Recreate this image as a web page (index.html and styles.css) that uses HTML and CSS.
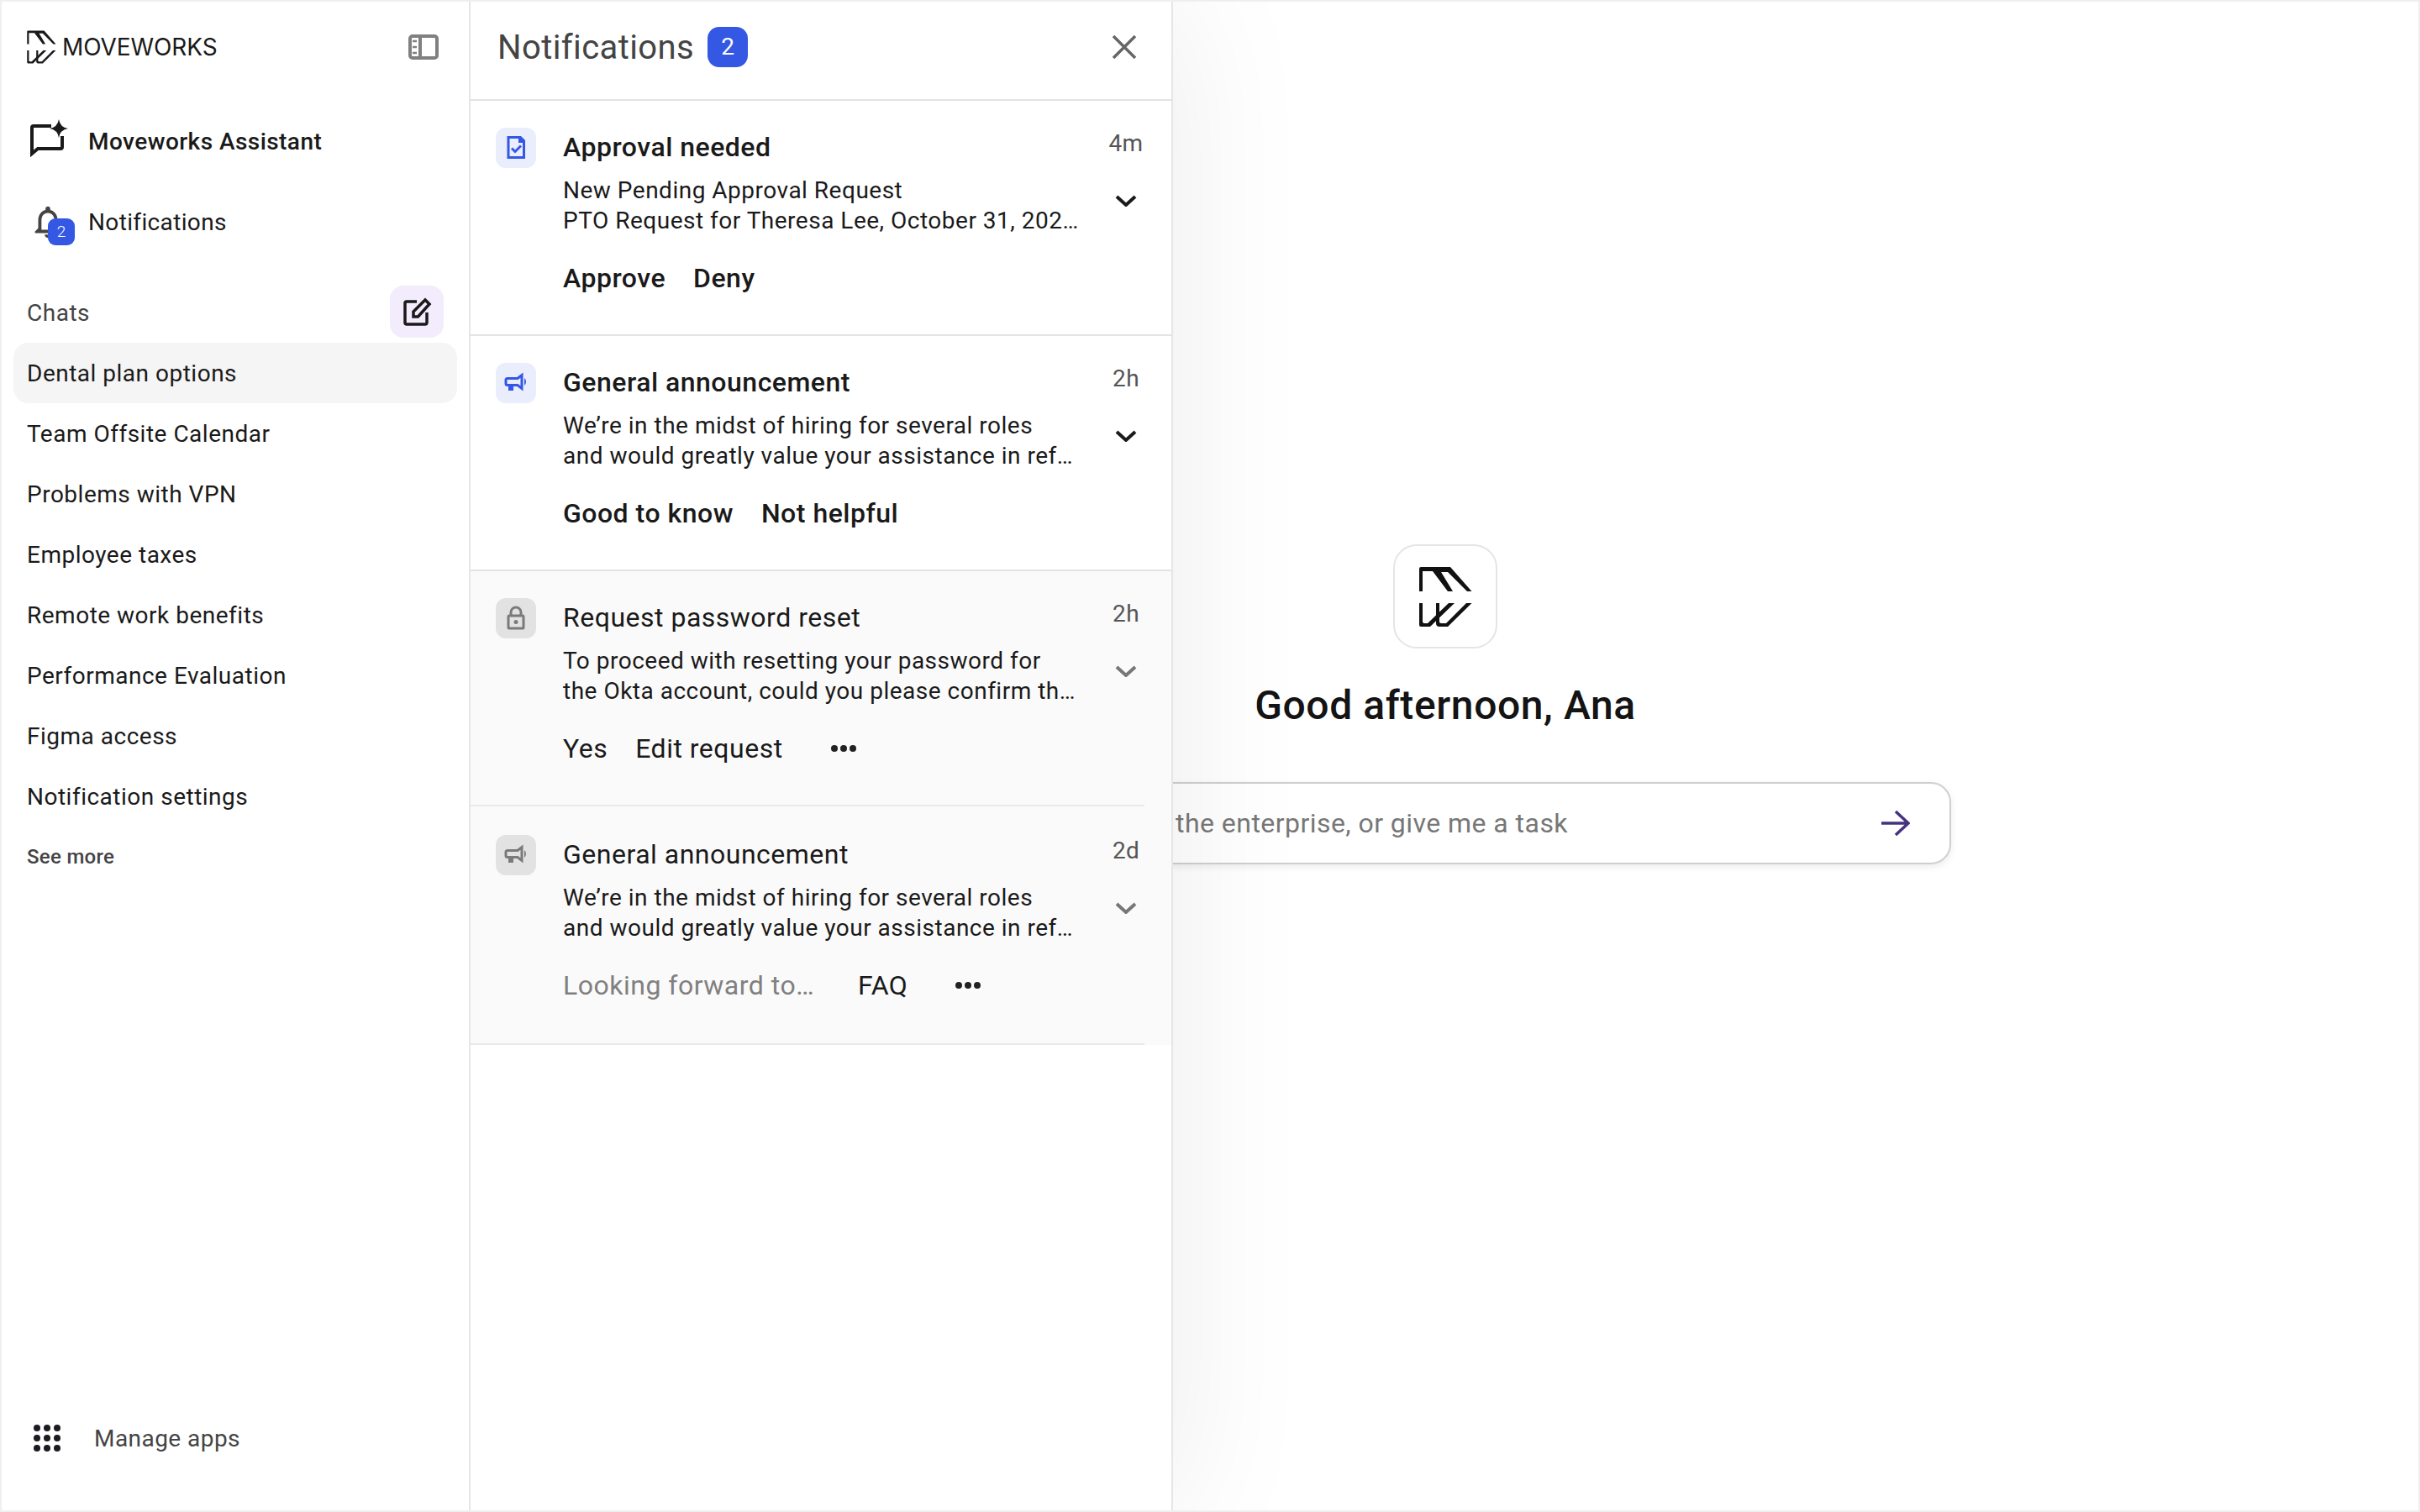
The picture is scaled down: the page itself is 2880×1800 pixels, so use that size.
FILE: index.html
```html
<!DOCTYPE html>
<html lang="en">
<head>
  <meta charset="UTF-8" />
  <title>Moveworks Assistant</title>
  <link rel="stylesheet" href="styles.css">
</head>
<body>
  <div class="app">
    <aside class="sidebar">
      <div class="side-head">
        <div class="brand">
          <svg class="brand-logo" viewBox="38 33 63 73"><path d="M38 63V36q0-2 2-2H75L100.500 63H95L72 40H64L78 63H72L54 39H42V63Z"/><path d="M38 77H42V99q0 2 2 2H48L73 77H80L51 105H40q-2 0-2-2Z"/><path d="M58 77H62V99q0 2 2 2H70L94 77H100.500L72 105H62q-4 0-4-4Z"/></svg>
          <span>MOVEWORKS</span>
        </div>
        <svg class="collapse" viewBox="0 0 36 30"><rect x="2" y="2" width="32" height="26" rx="3"/><path d="M14 2V28"/><path class="ticks" d="M5 8H10M5 15H10M5 22H10"/></svg>
      </div>

      <nav class="side-nav">
        <a class="nav-item nav-strong">
          <span class="nav-icon">
            <svg width="60" height="60" viewBox="0 0 60 60"><path class="line" d="M31 12H10a2 2 0 0 0-2 2V45L15 39H42a2 2 0 0 0 2-2V24"/><path d="M40 4Q41.5 13.5 51 15 41.5 16.5 40 26 38.5 16.5 29 15 38.5 13.5 40 4Z"/></svg>
          </span>
          Moveworks Assistant
        </a>
        <a class="nav-item nav-plain">
          <span class="nav-icon">
            <svg class="bell" width="46" height="46" viewBox="0 0 24 24"><path d="M12 22c1.1 0 2-.9 2-2h-4c0 1.1.89 2 2 2zm6-6v-5c0-3.07-1.64-5.64-4.5-6.32V4c0-.83-.67-1.5-1.5-1.5s-1.5.67-1.5 1.5v.68C7.63 5.36 6 7.92 6 11v5l-2 2v1h16v-1l-2-2zm-2 1H8v-6c0-2.48 1.51-4.5 4-4.5s4 2.02 4 4.5v6z"/></svg>
            <span class="bell-badge">2</span>
          </span>
          Notifications
        </a>
      </nav>

      <div class="chats-head">
        <span>Chats</span>
        <button class="compose">
          <svg width="36" height="36" viewBox="0 0 36 36"><path d="M18 6H6a2 2 0 0 0-2 2V31a2 2 0 0 0 2 2H28a2 2 0 0 0 2-2V19"/><path d="M14 24V18L28 4 33 9 19.5 24Z"/></svg>
        </button>
      </div>

      <ul class="chat-list">
        <li class="chat active">Dental plan options</li>
        <li class="chat">Team Offsite Calendar</li>
        <li class="chat">Problems with VPN</li>
        <li class="chat">Employee taxes</li>
        <li class="chat">Remote work benefits</li>
        <li class="chat">Performance Evaluation</li>
        <li class="chat">Figma access</li>
        <li class="chat">Notification settings</li>
      </ul>
      <div class="see-more">See more</div>

      <div class="side-foot">
        <svg width="32" height="32" viewBox="0 0 32 32"><circle cx="4" cy="4" r="4"/><circle cx="16" cy="4" r="4"/><circle cx="28" cy="4" r="4"/><circle cx="4" cy="16" r="4"/><circle cx="16" cy="16" r="4"/><circle cx="28" cy="16" r="4"/><circle cx="4" cy="28" r="4"/><circle cx="16" cy="28" r="4"/><circle cx="28" cy="28" r="4"/></svg>
        <span>Manage apps</span>
      </div>
    </aside>

    <main class="main">
      <div class="hero-logo">
        <svg width="63" height="73" viewBox="38 33 63 73"><path d="M38 63V36q0-2 2-2H75L100.500 63H95L72 40H64L78 63H72L54 39H42V63Z"/><path d="M38 77H42V99q0 2 2 2H48L73 77H80L51 105H40q-2 0-2-2Z"/><path d="M58 77H62V99q0 2 2 2H70L94 77H100.500L72 105H62q-4 0-4-4Z"/></svg>
      </div>
      <h1 class="greeting">Good afternoon, Ana</h1>
      <form class="ask">
        <input type="text" placeholder="Ask me about the enterprise, or give me a task" />
        <svg width="34" height="30" viewBox="0 0 34 30"><path d="M0 15H32M17 1L32 15 17 29"/></svg>
      </form>

      <section class="panel">
        <header class="panel-head">
          <h2>Notifications</h2>
          <span class="count">2</span>
          <svg class="close" width="30" height="28" viewBox="0 0 30 28"><path d="M2 1L28 27M28 1L2 27"/></svg>
        </header>

        <article class="note">
          <div class="note-grid">
            <div class="note-icon">
              <svg width="48" height="48" viewBox="0 0 48 48"><path class="line" d="M15 11.5H28L33.5 17V35.5H15Z"/><path d="M27 10H30L35 15V18H27Z"/><path class="line" d="M19 24.5L23 28.5 30 21.5"/></svg>
            </div>
            <div>
              <h3>Approval needed</h3>
              <p>New Pending Approval Request<br>PTO Request for Theresa Lee, October 31, 202…</p>
              <div class="actions">
                <span>Approve</span>
                <span>Deny</span>
              </div>
            </div>
            <div class="note-side">
              <time>4m</time>
              <svg class="chevron" width="26" height="14" viewBox="0 0 26 14"><path d="M2 2L13 12 24 2"/></svg>
            </div>
          </div>
          <div class="rule"></div>
        </article>

        <article class="note">
          <div class="note-grid">
            <div class="note-icon">
              <svg width="48" height="48" viewBox="0 0 48 48"><path class="line" d="M14 18.500H26L31 14.500V30.500L26 26.500H14a2 2 0 0 1-2-2V20.500a2 2 0 0 1 2-2Z"/><path d="M15 26H21V33H15ZM34 18a6 6 0 0 1 0 9Z"/></svg>
            </div>
            <div>
              <h3>General announcement</h3>
              <p>We’re in the midst of hiring for several roles<br>and would greatly value your assistance in ref…</p>
              <div class="actions">
                <span>Good to know</span>
                <span>Not helpful</span>
              </div>
            </div>
            <div class="note-side">
              <time>2h</time>
              <svg class="chevron" width="26" height="14" viewBox="0 0 26 14"><path d="M2 2L13 12 24 2"/></svg>
            </div>
          </div>
          <div class="rule"></div>
        </article>

        <article class="note read">
          <div class="note-grid">
            <div class="note-icon">
              <svg width="48" height="48" viewBox="0 0 48 48"><rect class="line" x="15" y="21" width="18" height="15" rx="1"/><path class="line" d="M18 21V17a6 6 0 0 1 12 0V21"/><circle cx="24" cy="28.500" r="2.500"/></svg>
            </div>
            <div>
              <h3>Request password reset</h3>
              <p>To proceed with resetting your password for<br>the Okta account, could you please confirm th…</p>
              <div class="actions">
                <span>Yes</span>
                <span>Edit request</span>
                <svg class="dots" width="30" height="8" viewBox="0 0 30 8"><circle cx="4" cy="4" r="4"/><circle cx="15" cy="4" r="4"/><circle cx="26" cy="4" r="4"/></svg>
              </div>
            </div>
            <div class="note-side">
              <time>2h</time>
              <svg class="chevron" width="26" height="14" viewBox="0 0 26 14"><path d="M2 2L13 12 24 2"/></svg>
            </div>
          </div>
          <div class="rule"></div>
        </article>

        <article class="note read last">
          <div class="note-grid">
            <div class="note-icon">
              <svg width="48" height="48" viewBox="0 0 48 48"><path class="line" d="M14 18.500H26L31 14.500V30.500L26 26.500H14a2 2 0 0 1-2-2V20.500a2 2 0 0 1 2-2Z"/><path d="M15 26H21V33H15ZM34 18a6 6 0 0 1 0 9Z"/></svg>
            </div>
            <div>
              <h3>General announcement</h3>
              <p>We’re in the midst of hiring for several roles<br>and would greatly value your assistance in ref…</p>
              <div class="actions">
                <span class="faded">Looking forward to…</span>
                <span>FAQ</span>
                <svg class="dots" width="30" height="8" viewBox="0 0 30 8"><circle cx="4" cy="4" r="4"/><circle cx="15" cy="4" r="4"/><circle cx="26" cy="4" r="4"/></svg>
              </div>
            </div>
            <div class="note-side">
              <time class="old">2d</time>
              <svg class="chevron" width="26" height="14" viewBox="0 0 26 14"><path d="M2 2L13 12 24 2"/></svg>
            </div>
          </div>
          <div class="rule"></div>
        </article>
      </section>
    </main>
  </div>
</body>
</html>
```

FILE: styles.css
```css
* {
  box-sizing: border-box;
  margin: 0;
  padding: 0;
}

html, body {
  height: 100%;
}

body {
  font-family: 'Roboto', sans-serif;
  color: #1a1a1a;
  background: #fff;
}

.app {
  display: flex;
  height: 1800px;
  border: 2px solid #efefef;
  overflow: hidden;
}

/* sidebar */

.sidebar {
  position: relative;
  z-index: 2;
  flex: 0 0 558px;
  display: flex;
  flex-direction: column;
  background: #fff;
  border-right: 2px solid #e6e6e6;
}

.side-head {
  display: flex;
  align-items: center;
  justify-content: space-between;
  height: 108px;
  padding: 0 36px 0 30px;
}

.brand {
  display: flex;
  align-items: center;
  gap: 7px;
  font-family: 'Inter', sans-serif;
  font-size: 28px;
  letter-spacing: -0.1px;
}

.brand-logo {
  width: 35px;
  height: 40px;
  fill: #1a1a1a;
}

.collapse {
  width: 36px;
  height: 30px;
  fill: none;
  stroke: #808080;
  stroke-width: 4;
}

.collapse .ticks {
  stroke-width: 2.5;
}

.side-nav {
  margin-top: 10px;
}

.nav-item {
  display: flex;
  align-items: center;
  height: 96px;
  padding-left: 28px;
  font-size: 28px;
  letter-spacing: 0.45px;
}

.nav-plain {
  letter-spacing: 0.35px;
}

.nav-strong {
  font-weight: 500;
}

.nav-icon {
  position: relative;
  display: flex;
  align-items: center;
  width: 75px;
  height: 60px;
}

.nav-icon svg {
  fill: #1a1a1a;
}

.nav-icon .line {
  fill: none;
  stroke: #1a1a1a;
  stroke-width: 4;
}

.nav-icon .bell {
  fill: #444;
  margin-left: 4px;
}

.bell-badge {
  position: absolute;
  left: 27px;
  top: 26px;
  width: 32px;
  height: 32px;
  border-radius: 9px;
  background: #3457e4;
  color: #fff;
  font-size: 19px;
  font-weight: 300;
  line-height: 32px;
  text-align: center;
  letter-spacing: 0;
}

.chats-head {
  display: flex;
  align-items: center;
  justify-content: space-between;
  height: 62px;
  margin-top: 28px;
  padding: 0 30px 0 30px;
  font-size: 28px;
  letter-spacing: 0.5px;
  color: #444;
}

.chats-head span {
  padding-top: 2px;
}

.compose {
  width: 64px;
  height: 62px;
  border: none;
  border-radius: 16px;
  background: #f3ecfd;
  display: flex;
  align-items: center;
  justify-content: center;
}

.compose svg {
  fill: none;
  stroke: #1a1a1a;
  stroke-width: 3.5;
}

.chat-list {
  list-style: none;
  margin-top: 6px;
  padding: 0 14px;
}

.chat {
  height: 72px;
  padding: 1px 0 0 16px;
  border-radius: 18px;
  font-size: 28px;
  letter-spacing: 0.5px;
  line-height: 72px;
}

.chat.active {
  background: #f5f5f5;
}

.see-more {
  height: 70px;
  padding: 1px 0 0 30px;
  font-size: 24px;
  font-weight: 500;
  letter-spacing: 0.3px;
  line-height: 70px;
  color: #444;
}

.side-foot {
  display: flex;
  align-items: center;
  gap: 40px;
  height: 172px;
  margin-top: auto;
  padding-left: 38px;
  font-size: 28px;
  letter-spacing: 0.45px;
  color: #444;
}

.side-foot svg {
  fill: #1c1b22;
}

/* main column, the notifications panel lies over it */

.main {
  position: relative;
  flex: 1;
  display: flex;
  flex-direction: column;
  align-items: center;
  padding: 646px 0 0 2px;
}

.hero-logo {
  display: flex;
  align-items: center;
  justify-content: center;
  width: 124px;
  height: 124px;
  border: 2px solid #e5e5e5;
  border-radius: 28px;
}

.hero-logo svg {
  fill: #111;
}

.greeting {
  margin-top: 40px;
  font-size: 48px;
  font-weight: 500;
  line-height: 56px;
  letter-spacing: 0.6px;
  color: #141414;
}

.ask {
  display: flex;
  align-items: center;
  width: 1204px;
  height: 98px;
  margin-top: 63px;
  padding: 0 47px 0 69px;
  border: 2px solid #cfcfcf;
  border-radius: 24px;
  box-shadow: 0 3px 8px rgba(0, 0, 0, 0.08);
}

.ask input {
  flex: 1;
  border: none;
  outline: none;
  font-family: inherit;
  font-size: 32px;
  letter-spacing: 0.45px;
}

.ask input::placeholder {
  color: #777;
  opacity: 1;
}

.ask svg {
  fill: none;
  stroke: #46327f;
  stroke-width: 3.5;
}

.panel {
  position: absolute;
  top: 0;
  left: 0;
  bottom: 0;
  width: 836px;
  background: #fff;
  border-right: 2px solid #e6e6e6;
  box-shadow: 0 0 160px rgba(0, 0, 0, 0.08);
}

.panel-head {
  display: flex;
  align-items: center;
  gap: 16px;
  height: 118px;
  padding: 0 41px 8px 32px;
  border-bottom: 2px solid #e3e3e3;
}

.panel-head h2 {
  font-size: 40px;
  font-weight: 400;
  letter-spacing: 0.4px;
  color: #444;
}

.count {
  width: 48px;
  height: 48px;
  border-radius: 14px;
  background: #3457e4;
  color: #fff;
  font-size: 28px;
  line-height: 48px;
  text-align: center;
}

.close {
  margin-left: auto;
  fill: none;
  stroke: #666;
  stroke-width: 3.5;
}

.note-grid {
  display: grid;
  grid-template-columns: 48px minmax(0, 1fr) 80px;
  column-gap: 32px;
  padding: 32px 14px 42px 30px;
}

.note-icon {
  width: 48px;
  height: 48px;
  border-radius: 12px;
  background: #e9edfc;
}

.note-icon svg {
  fill: #3457e4;
}

.note-icon .line {
  fill: none;
  stroke: #3457e4;
  stroke-width: 3;
}

.note h3 {
  font-size: 32px;
  font-weight: 500;
  line-height: 46px;
  letter-spacing: 0.5px;
}

.note p {
  margin-top: 11px;
  font-size: 28px;
  line-height: 36px;
  letter-spacing: 0.5px;
  white-space: nowrap;
}

.actions {
  display: flex;
  align-items: center;
  gap: 33px;
  height: 48px;
  margin-top: 26px;
  margin-bottom: 1px;
  font-size: 32px;
  font-weight: 500;
  letter-spacing: 0.5px;
}

.note-side {
  display: flex;
  flex-direction: column;
  align-items: center;
}

.note-side time {
  font-size: 28px;
  line-height: 38px;
  letter-spacing: 0.3px;
  color: #555;
}

.chevron {
  margin-top: 42px;
  fill: none;
  stroke: #1a1a1a;
  stroke-width: 4;
}

.rule {
  height: 2px;
  background: #e3e3e3;
}

.read {
  background: #fafafa;
}

.read h3,
.read .actions {
  font-weight: 400;
}

.read .note-icon {
  background: #e2e2e2;
}

.read .note-icon svg {
  fill: #7a7a7a;
}

.read .note-icon .line {
  stroke: #7a7a7a;
}

.read .chevron {
  stroke: #777;
}

.read .rule {
  margin-right: 32px;
  background: #e9e9e9;
}

.read .dots {
  margin-left: 24px;
  fill: #222;
}

.last .note-grid {
  padding-top: 34px;
  padding-bottom: 44px;
}

.faded {
  margin-right: 19px;
  color: #808080;
}

.old {
  color: #888;
}
```
